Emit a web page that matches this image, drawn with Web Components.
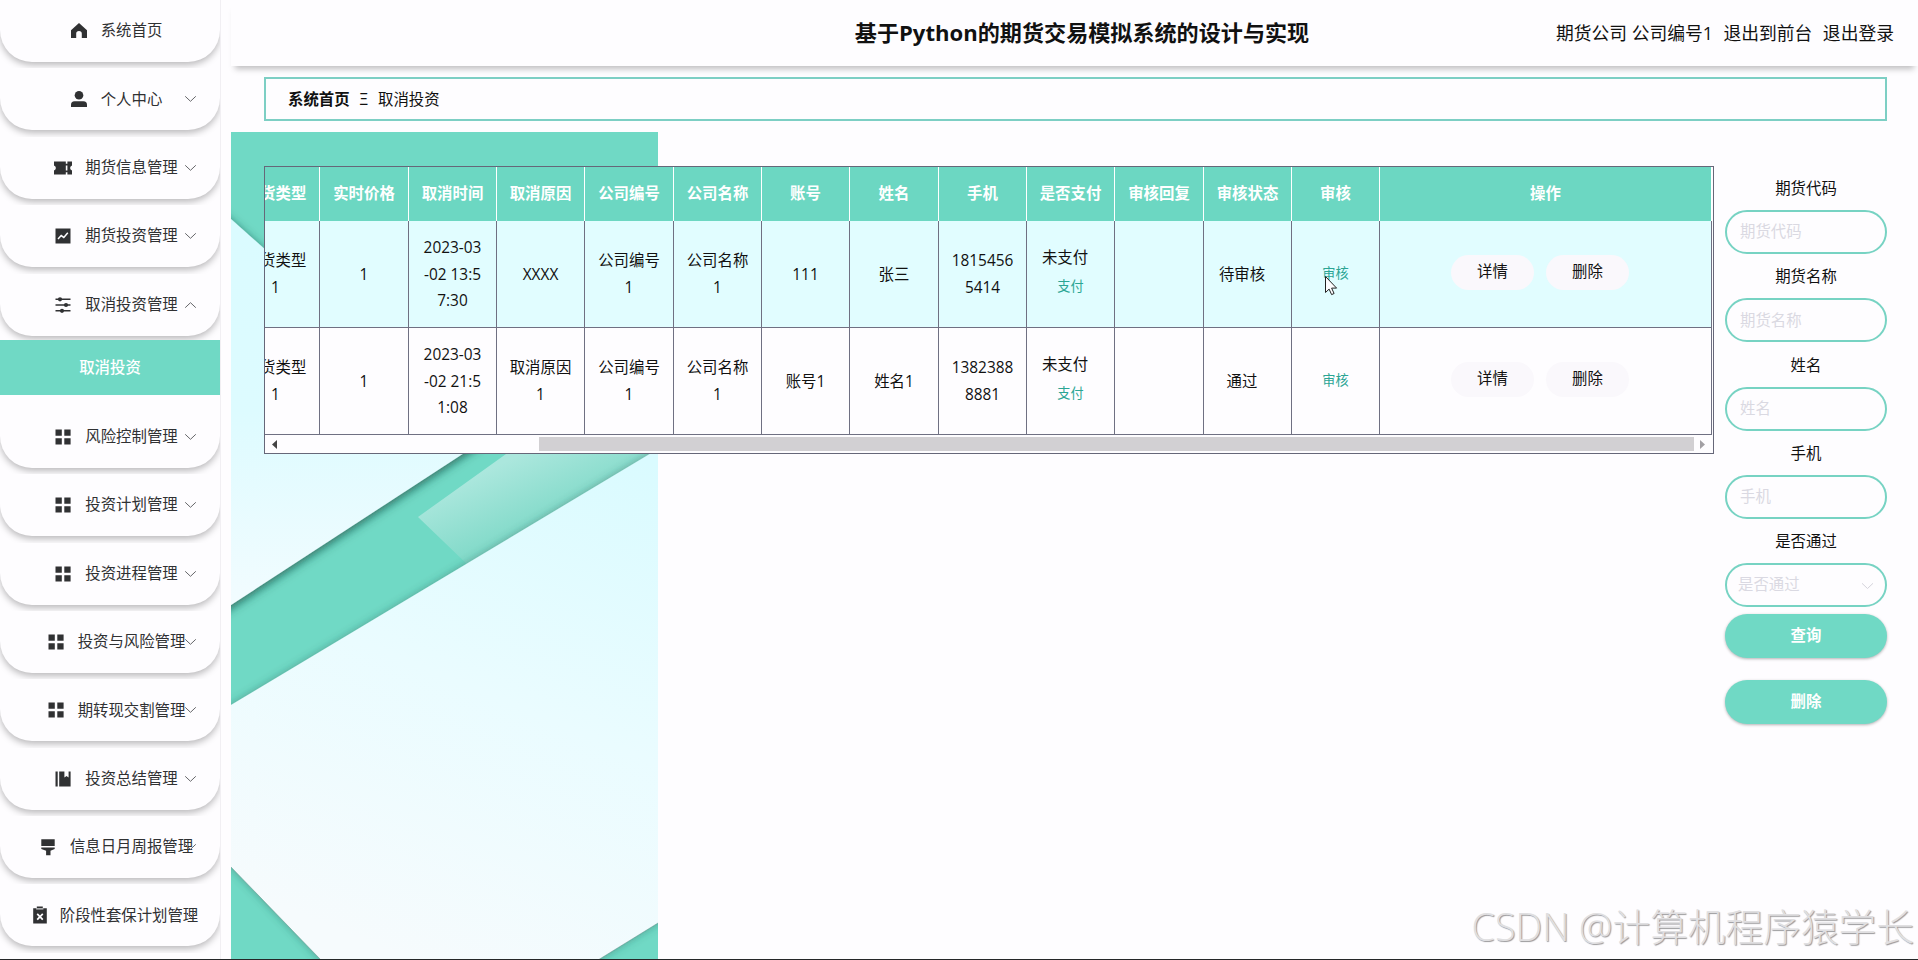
<!DOCTYPE html>
<html lang="zh-CN">
<head>
<meta charset="utf-8">
<title>基于Python的期货交易模拟系统的设计与实现</title>
<style>
  body {
    margin: 0;
    width: 1918px;
    height: 960px;
    overflow: hidden;
    background: #fefdff;
    color: #111;
    font: 15.4px/1 "Open Sans", "Noto Sans CJK SC", sans-serif;
    --teal: #70d9c5;
    --page: #fefdff;
  }
</style>
</head>
<body>
<futures-app></futures-app>

<script>
const ICONS = {
  home: '<path d="M9 1 17 8.2V16h-5.2v-4.2a2.8 2.8 0 0 0-5.6 0V16H1V8.2z"/>',
  user: '<circle cx="9" cy="5.3" r="4.3"/><path d="M1 17v-2.2Q1 11.2 4.6 11.2h8.8q3.6 0 3.6 3.6V17z"/>',
  ticket: '<path d="M0 2.5h11.8v2.2h1.6V2.5H18v4a2.6 2.6 0 0 0 0 5v4h-4.6v-2.2h-1.6v2.2H0v-4a2.6 2.6 0 0 0 0-5z"/><path d="M11.8 6.5h1.6v5h-1.6z" fill="#fefdff"/>',
  trend: '<path d="M1.5 1.5h15v15h-15z"/><path d="m4 12 3.2-3.4 2.6 1.8 4-4.6" fill="none" stroke="#fefdff" stroke-width="1.5"/>',
  sliders: '<path d="M1.5 2.6h15v1.5h-15zM1.5 8.3h15v1.5h-15zM1.5 14h15v1.5h-15z"/><circle cx="6" cy="3.3" r="2.1"/><circle cx="12" cy="9" r="2.1"/><circle cx="8" cy="14.8" r="2.1"/>',
  menu: '<path d="M1.5 1.5h6.3v6.3H1.5zM10.3 1.5h6.3v6.3h-6.3zM1.5 10.3h6.3v6.3H1.5zM10.3 10.3h6.3v6.3h-6.3z"/>',
  book: '<path d="M1.5 1.5h2.2v15H1.5zM5.2 1.5h5.2v6l2.1-1.6 2.1 1.6v-6h2v15H5.2z"/>',
  brush: '<path d="M2.3 1.2h13.4v6.9H2.3zM2.3 9.4h13.4v1.7l-4.2 1.7v4.4H7.1v-4.4l-4.8-1.7z"/>',
  clipboard: '<path d="M5.8.4h6v1.8h4v15.2H2.2V2.2h3.6z"/><path d="M5.2 2.9h7.200" stroke="#fefdff"/><path d="m6.200 7.800 5.600 5.800m0-5.800-5.600 5.800" stroke="#fefdff" stroke-width="1.700"/>'
};

const MENU = [
  ["home", "系统首页", "none"],
  ["user", "个人中心"],
  ["ticket", "期货信息管理"],
  ["trend", "期货投资管理"],
  ["sliders", "取消投资管理", "up"],
  ["menu", "风险控制管理"],
  ["menu", "投资计划管理"],
  ["menu", "投资进程管理"],
  ["menu", "投资与风险管理"],
  ["menu", "期转现交割管理"],
  ["book", "投资总结管理"],
  ["brush", "信息日月周报管理"],
  ["clipboard", "阶段性套保计划管理"]
];

const HEADS = ["期货类型", "实时价格", "取消时间", "取消原因", "公司编号", "公司名称", "账号",
  "姓名", "手机", "是否支付", "审核回复", "审核状态", "审核", "操作"];

const ROWS = [
  ["期货类型\n1", "1", "2023-03\n-02 13:5\n7:30", "XXXX", "公司编号\n1", "公司名称\n1", "111", "张三", "1815456\n5414", "未支付", "", "待审核"],
  ["期货类型\n1", "1", "2023-03\n-02 21:5\n1:08", "取消原因\n1", "公司编号\n1", "公司名称\n1", "账号1", "姓名1", "1382388\n8881", "未支付", "", "通过"]
];

class BaseElement extends HTMLElement {
  connectedCallback() {
    if (this.shadowRoot) return;
    this.attachShadow({ mode: "open" }).innerHTML = this.render();
  }
}

class SideItem extends BaseElement {
  render() {
    const arrow = this.getAttribute("arrow") || "down";
    return `
      <style>
        :host {
          display: block;
          flex: none;
          height: 68.4px;
          overflow: hidden;
          background: var(--page);
        }
        :host([arrow="up"]) { height: 66.400px; }
        .pill {
          position: relative;
          box-sizing: border-box;
          height: 62px;
          padding-left: 12px;
          display: flex;
          align-items: center;
          justify-content: center;
          gap: 13px;
          white-space: nowrap;
          color: #303133;
          background: var(--page);
          border-radius: 0 0 32px 32px;
          box-shadow: 0 3px 7px rgba(0, 0, 0, .27);
        }
        :host([icon="clipboard"]) .pill { padding-left: 9px; gap: 11px; }
        .icon { width: 18px; height: 18px; fill: #303133; flex: none; }
        .arrow {
          position: absolute;
          right: 23px;
          top: 27px;
          width: 13px;
          height: 8px;
          fill: none;
          stroke: #66676a;
        }
        .up { transform: scaleY(-1); }
        .none { display: none; }
      </style>
      <div class="pill">
        <svg class="icon" viewBox="0 0 18 18">${ICONS[this.getAttribute("icon")]}</svg>
        <span><slot></slot></span>
        <svg class="arrow ${arrow}" viewBox="0 0 13 8"><path d="m1.200 1.300 5.300 5 5.300-5"/></svg>
      </div>`;
  }
}
customElements.define("side-item", SideItem);

class SideMenu extends BaseElement {
  render() {
    const items = MENU.map(([icon, text, arrow]) => `
      <side-item icon="${icon}" arrow="${arrow || "down"}">${text}</side-item>
      ${arrow === "up" ? '<div class="sub">取消投资</div>' : ""}`).join("");
    return `
      <style>
        :host {
          display: flex;
          flex-direction: column;
          flex: none;
          width: 220px;
          height: 960px;
          overflow: hidden;
          border-right: 1px solid #f1eff3;
        }
        .sub {
          flex: none;
          height: 55px;
          line-height: 55px;
          margin-bottom: 10.800px;
          text-align: center;
          color: #fff;
          font-weight: 500;
          background: var(--teal);
        }
      </style>
      ${items}`;
  }
}
customElements.define("side-menu", SideMenu);

class TopBar extends BaseElement {
  render() {
    return `
      <style>
        :host {
          display: grid;
          grid-template-columns: 1fr auto 1fr;
          align-items: center;
          height: 66px;
          box-sizing: border-box;
          padding: 0 24px 0 39px;
          background: var(--page);
          box-shadow: 0 7px 6px -4px rgba(0, 0, 0, .25);
        }
        h1 { grid-column: 2; margin: 0 0 2px; font-size: 22.1px; line-height: 30px; }
        nav {
          display: flex;
          justify-content: flex-end;
          gap: 10.500px;
          font-size: 17.8px;
          line-height: 26px;
        }
      </style>
      <h1>基于Python的期货交易模拟系统的设计与实现</h1>
      <nav><span>期货公司 公司编号1</span><span>退出到前台</span><span>退出登录</span></nav>`;
  }
}
customElements.define("top-bar", TopBar);

class CrumbBar extends BaseElement {
  render() {
    return `
      <style>
        :host {
          display: flex;
          align-items: center;
          gap: 10px;
          height: 44px;
          box-sizing: border-box;
          margin: 11px 31px 11px 33px;
          padding: 2px 0 0 22px;
          border: 2px solid #7dcfc4;
        }
      </style>
      <b>系统首页</b><span>Ξ</span><span>取消投资</span>`;
  }
}
customElements.define("crumb-bar", CrumbBar);

// Folded paper backdrop behind the left part of the table
class PaperArt extends BaseElement {
  render() {
    return `
      <style>
        :host { display: block; width: 427px; height: 828px; }
        svg { display: block; }
      </style>
      <svg width="427" height="828" viewBox="231 132 427 828">
        <defs>
          <linearGradient id="a" x1="0" y1="0" x2="0" y2="1">
            <stop offset="0" stop-color="#dafbff"/><stop offset=".5" stop-color="#ddfbff"/><stop offset="1" stop-color="#f3fcff"/>
          </linearGradient>
          <linearGradient id="b" gradientUnits="userSpaceOnUse" x1="620" y1="450" x2="410" y2="960">
            <stop offset="0" stop-color="#dafbff"/><stop offset=".5" stop-color="#eafcff"/><stop offset="1" stop-color="#f6fbfd"/>
          </linearGradient>
          <linearGradient id="c" gradientUnits="userSpaceOnUse" x1="455" y1="485" x2="485" y2="550">
            <stop offset="0" stop-color="#abe7dd"/><stop offset="1" stop-color="#82dac9"/>
          </linearGradient>
          <filter id="s" x="-10%" y="-10%" width="120%" height="120%">
            <feDropShadow dx="1" dy="3" stdDeviation="5" flood-color="#10473d" flood-opacity=".7"/>
          </filter>
          <filter id="t" x="-10%" y="-10%" width="120%" height="120%">
            <feDropShadow dx="0" dy="0" stdDeviation="4" flood-color="#20574d" flood-opacity=".45"/>
          </filter>
        </defs>
        <path fill="#70d9c5" d="M231 132h427v828H231z"/>
        <path fill="url(#a)" filter="url(#s)" d="M215 205 231 219 481 442 231 605l-16 10z"/>
        <path fill="url(#c)" d="M418 517 506 454 560 415H690V430L469 566z"/>
        <path fill="url(#b)" filter="url(#t)" d="M211 717 658 449 678 437V911L658 923 598 960 560 984H344L321 960 231 867 211 846z"/>
        <path fill="none" stroke="#20574d" stroke-opacity=".3" d="M231 867 321 960M658 923 598 960"/>
      </svg>`;
  }
}
customElements.define("paper-art", PaperArt);

class DataTable extends BaseElement {
  render() {
    const head = HEADS.map(h => `<div class="th">${h}</div>`).join("");
    const body = ROWS.map((row, i) => {
      const cells = row.map((text, c) => {
        if (c === 9) return `<div class="td pay"><span class="tag">${text}</span><a>支付</a></div>`;
        return `<div class="td${c === 11 ? " state" : ""}">${text}</div>`;
      }).join("");
      return `<div class="row r${i}">${cells}<div class="td check"><a>审核</a></div><div class="td ops"><button>详情</button><button>删除</button></div></div>`;
    }).join("");
    return `
      <style>
        :host {
          display: block;
          box-sizing: border-box;
          width: 1450px;
          height: 288px;
          flex: none;
          border: 1px solid #666779;
          background: var(--page);
        }
        .view {
          display: flex;
          flex-direction: column;
          align-items: flex-end;
          overflow: hidden;
          padding-right: 1px;
        }
        .row {
          display: grid;
          grid-template-columns: 88px 89px 88px 88px 89px 88px 88px 89px 88px 88px 89px 88px 88px 332px;
        }
        .head { color: #fff; font-weight: bold; background: #6cd7c2; height: 54px; }
        .r0 { background: #e1fdff; }
        .th {
          box-sizing: border-box;
          border: solid #fff;
          border-width: 0 1px 1px 0;
          line-height: 54px;
          text-align: center;
        }
        .td {
          box-sizing: border-box;
          height: 107px;
          padding-top: 2px;
          border: solid #6f7082;
          border-width: 0 1px 1px 0;
          display: flex;
          align-items: center;
          justify-content: center;
          text-align: center;
          white-space: pre-line;
          line-height: 26.700px;
        }
        .state { padding-right: 11px; }
        a { font-size: 13.200px; color: #2ba594; }
        .pay { flex-direction: column; line-height: 29.500px; padding: 0 0 4px; }
        .tag { margin-right: 11px; }
        .check { padding: 0 0 2px; }
        .ops { gap: 12px; padding: 0 11px 4px 0; }
        button {
          width: 83px;
          height: 35px;
          padding: 1px 0 0;
          border: 0;
          border-radius: 18px;
          background: #faf8fc;
          color: #111;
          font: inherit;
        }
        .bar {
          height: 18px;
          display: flex;
          align-items: center;
          justify-content: space-between;
          padding: 0 8px 0 7px;
        }
        .bar svg { width: 5px; height: 9px; }
        .thumb { height: 14px; width: 1155px; margin: 0 6px 0 auto; background: #d2d0d3; }
      </style>
      <div class="view">
        <div class="row head">${head}</div>
        ${body}
      </div>
      <div class="bar">
        <svg viewBox="0 0 5 9"><path d="M5 0v9L0 4.500z" fill="#444"/></svg>
        <div class="thumb"></div>
        <svg viewBox="0 0 5 9"><path d="M0 0v9l5-4.500z" fill="#a2a0a4"/></svg>
      </div>`;
  }
}
customElements.define("data-table", DataTable);

class SearchField extends BaseElement {
  render() {
    const label = this.getAttribute("label");
    const select = this.hasAttribute("select");
    return `
      <style>
        :host { display: block; height: 88.300px; }
        label { display: block; height: 44px; line-height: 46px; text-align: center; }
        .box {
          box-sizing: border-box;
          height: 44px;
          display: flex;
          align-items: center;
          justify-content: space-between;
          padding: 0 11px 0 ${select ? 11 : 13}px;
          border: 2px solid #77d3c3;
          border-radius: 22px;
          color: #dad9e2;
        }
        svg { width: 13px; height: 8px; fill: none; stroke: #d5d4dc; margin-top: 2px; }
      </style>
      <label>${label}</label>
      <div class="box"><span>${label}</span>${select ? '<svg viewBox="0 0 13 8"><path d="m1 1.300 5.500 5.200L12 1.300"/></svg>' : ""}</div>`;
  }
}
customElements.define("search-field", SearchField);

class SearchForm extends BaseElement {
  render() {
    return `
      <style>
        :host { display: block; width: 162px; flex: none; }
        button {
          display: block;
          width: 162px;
          height: 44px;
          margin: 0 0 22px;
          padding: 0;
          border: 0;
          border-radius: 22px;
          background: var(--teal);
          color: #fff;
          font: inherit;
          font-weight: bold;
          box-shadow: 0 1px 3px rgba(0, 0, 0, .3);
        }
        .actions { padding-top: 6.500px; }
      </style>
      <search-field label="期货代码"></search-field>
      <search-field label="期货名称"></search-field>
      <search-field label="姓名"></search-field>
      <search-field label="手机"></search-field>
      <search-field label="是否通过" select></search-field>
      <div class="actions"><button>查询</button><button>删除</button></div>`;
  }
}
customElements.define("search-form", SearchForm);

class FuturesApp extends BaseElement {
  render() {
    return `
      <style>
        :host {
          position: relative;
          display: flex;
          gap: 10px;
          width: 1918px;
          height: 960px;
          overflow: hidden;
        }
        main { flex: 1; min-width: 0; }
        .stage { display: grid; }
        .stage > * { grid-area: 1 / 1; }
        .work { display: flex; gap: 11px; padding: 34px 31px 0 33px; }
        .mark {
          position: absolute;
          right: 4px;
          top: 904px;
          font-size: 37.700px;
          line-height: 46px;
          font-weight: 300;
          white-space: nowrap;
          color: #e0dfe1;
          text-shadow: 1px 1px 1px #99989b;
        }
        .cursor { position: absolute; left: 1324px; top: 275px; }
        .edge { position: absolute; left: 0; right: 0; bottom: 0; height: 1px; background: #252728; }
      </style>
      <side-menu></side-menu>
      <main>
        <top-bar></top-bar>
        <crumb-bar></crumb-bar>
        <div class="stage">
          <paper-art></paper-art>
          <div class="work">
            <data-table></data-table>
            <search-form></search-form>
          </div>
        </div>
      </main>
      <svg class="cursor" width="14" height="21" viewBox="0 0 14 21">
        <path d="M1.500 1.500v16l3.600-3.400 2.500 5.500 2.500-1.100-2.500-5.400h5z" fill="#fefdff" stroke="#222"/>
      </svg>
      <div class="mark">CSDN @计算机程序猿学长</div>
      <div class="edge"></div>`;
  }
}
customElements.define("futures-app", FuturesApp);
</script>
</body>
</html>
